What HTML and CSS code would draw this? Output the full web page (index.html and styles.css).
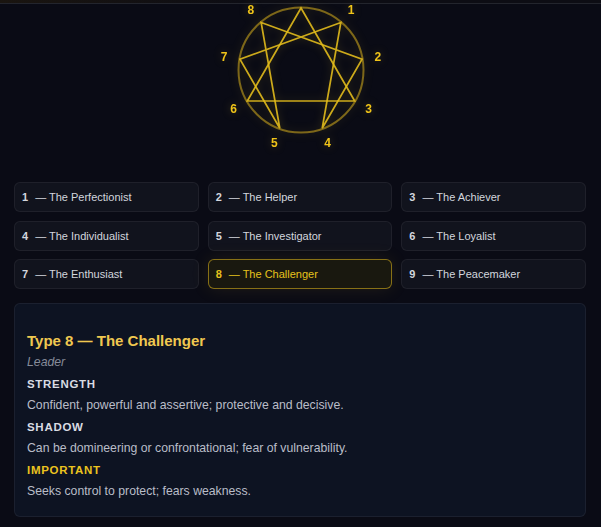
FILE: index.html
```html
<!DOCTYPE html>
<html lang="en">
<head>
  <meta charset="UTF-8" />
  <meta name="viewport" content="width=device-width, initial-scale=1.0"/>
  <title>Enneagram</title>
  <link rel="stylesheet" href="styles.css">
</head>
<body>

  <div class="topbar"></div>

  <div class="hero">
    <svg class="enneagram" viewBox="-90 -67 180 165" width="180" height="165">
      <circle cx="0" cy="0" r="62.5" class="ring"/>
      <polygon class="lines" points="0,-62 53.69,31 -53.69,31"/>
      <polygon class="lines" points="39.85,-47.49 21.21,58.26 61.06,-10.77 -39.85,-47.49 -21.21,58.26 -61.06,-10.77"/>
      <g class="labels">
        <text x="50.1" y="-59.7">1</text>
        <text x="76.8" y="-13.5">2</text>
        <text x="67.5" y="39">3</text>
        <text x="26.7" y="73.3">4</text>
        <text x="-26.7" y="73.3">5</text>
        <text x="-67.5" y="39">6</text>
        <text x="-76.8" y="-13.5">7</text>
        <text x="-50.1" y="-59.7">8</text>
      </g>
    </svg>
  </div>

  <div class="types">
    <div class="type-card"><b>1</b>— The Perfectionist</div>
    <div class="type-card"><b>2</b>— The Helper</div>
    <div class="type-card"><b>3</b>— The Achiever</div>
    <div class="type-card"><b>4</b>— The Individualist</div>
    <div class="type-card"><b>5</b>— The Investigator</div>
    <div class="type-card"><b>6</b>— The Loyalist</div>
    <div class="type-card"><b>7</b>— The Enthusiast</div>
    <div class="type-card active"><b>8</b>— The Challenger</div>
    <div class="type-card"><b>9</b>— The Peacemaker</div>
  </div>

  <div class="details">
    <h2>Type 8 — The Challenger</h2>
    <div class="role">Leader</div>

    <h3>STRENGTH</h3>
    <p>Confident, powerful and assertive; protective and decisive.</p>

    <h3>SHADOW</h3>
    <p>Can be domineering or confrontational; fear of vulnerability.</p>

    <h3 class="gold">IMPORTANT</h3>
    <p>Seeks control to protect; fears weakness.</p>
  </div>

</body>
</html>
```

FILE: styles.css
```css
body {
  background-color: #0a0b15;
  font-family: 'Liberation Sans', Arial, sans-serif;
  color: #d6d9e0;
  margin: 0;
  height: 527px;
  overflow: hidden;
}

.topbar {
  height: 3px;
  background: linear-gradient(90deg, #1a1510 0%, #0d0d14 40%, #0d0d14 100%);
  border-bottom: 1px solid #23252d;
}

.hero {
  display: flex;
  justify-content: center;
  height: 179px;
  margin-top: -1px;
}

.enneagram {
  display: block;
  overflow: hidden;
  filter: drop-shadow(0 0 4px rgba(230, 190, 30, 0.25));
}

.enneagram .ring {
  fill: none;
  stroke: #b8961c;
  stroke-opacity: 0.65;
  stroke-width: 2;
}

.enneagram .lines {
  fill: none;
  stroke: #e2bb1c;
  stroke-width: 1.7;
  stroke-linejoin: miter;
  stroke-opacity: 0.9;
}

.enneagram .labels text {
  fill: #f0c419;
  font-family: 'Liberation Sans', Arial, sans-serif;
  font-weight: bold;
  font-size: 12px;
  text-anchor: middle;
  dominant-baseline: central;
}

.types {
  display: grid;
  grid-template-columns: repeat(3, 1fr);
  grid-auto-rows: 30px;
  column-gap: 9px;
  row-gap: 8.5px;
  margin: 0 15px 0 14px;
}

.type-card {
  display: flex;
  align-items: center;
  padding: 0 7px;
  background-color: #11131d;
  border: 1px solid rgba(255, 255, 255, 0.06);
  border-radius: 6px;
  font-size: 11px;
  color: #d3d6dd;
}

.type-card b {
  margin-right: 7px;
}

.type-card.active {
  background-color: #19180f;
  border-color: rgba(226, 186, 30, 0.55);
  color: #e6c21c;
  box-shadow: 0 0 18px rgba(200, 160, 30, 0.12);
}

.details {
  margin: 14px 15px 0 14px;
  padding: 26px 12px 18px;
  height: 214px;
  box-sizing: border-box;
  background-color: #0d1322;
  border: 1px solid rgba(255, 255, 255, 0.06);
  border-radius: 6px;
}

.details h2 {
  margin: 0;
  font-size: 15px;
  color: #f0c850;
  line-height: 22px;
}

.details .role {
  margin-top: 2px;
  font-size: 12.25px;
  font-style: italic;
  color: #868b99;
  line-height: 16px;
}

.details h3 {
  margin: 6px 0 0;
  font-size: 11.5px;
  letter-spacing: 0.7px;
  color: #d9dce3;
  line-height: 16px;
}

.details h3.gold {
  color: #ebc31e;
}

.details p {
  margin: 5px 0 0;
  font-size: 12.25px;
  color: #b9bdc8;
  line-height: 16px;
}
```
